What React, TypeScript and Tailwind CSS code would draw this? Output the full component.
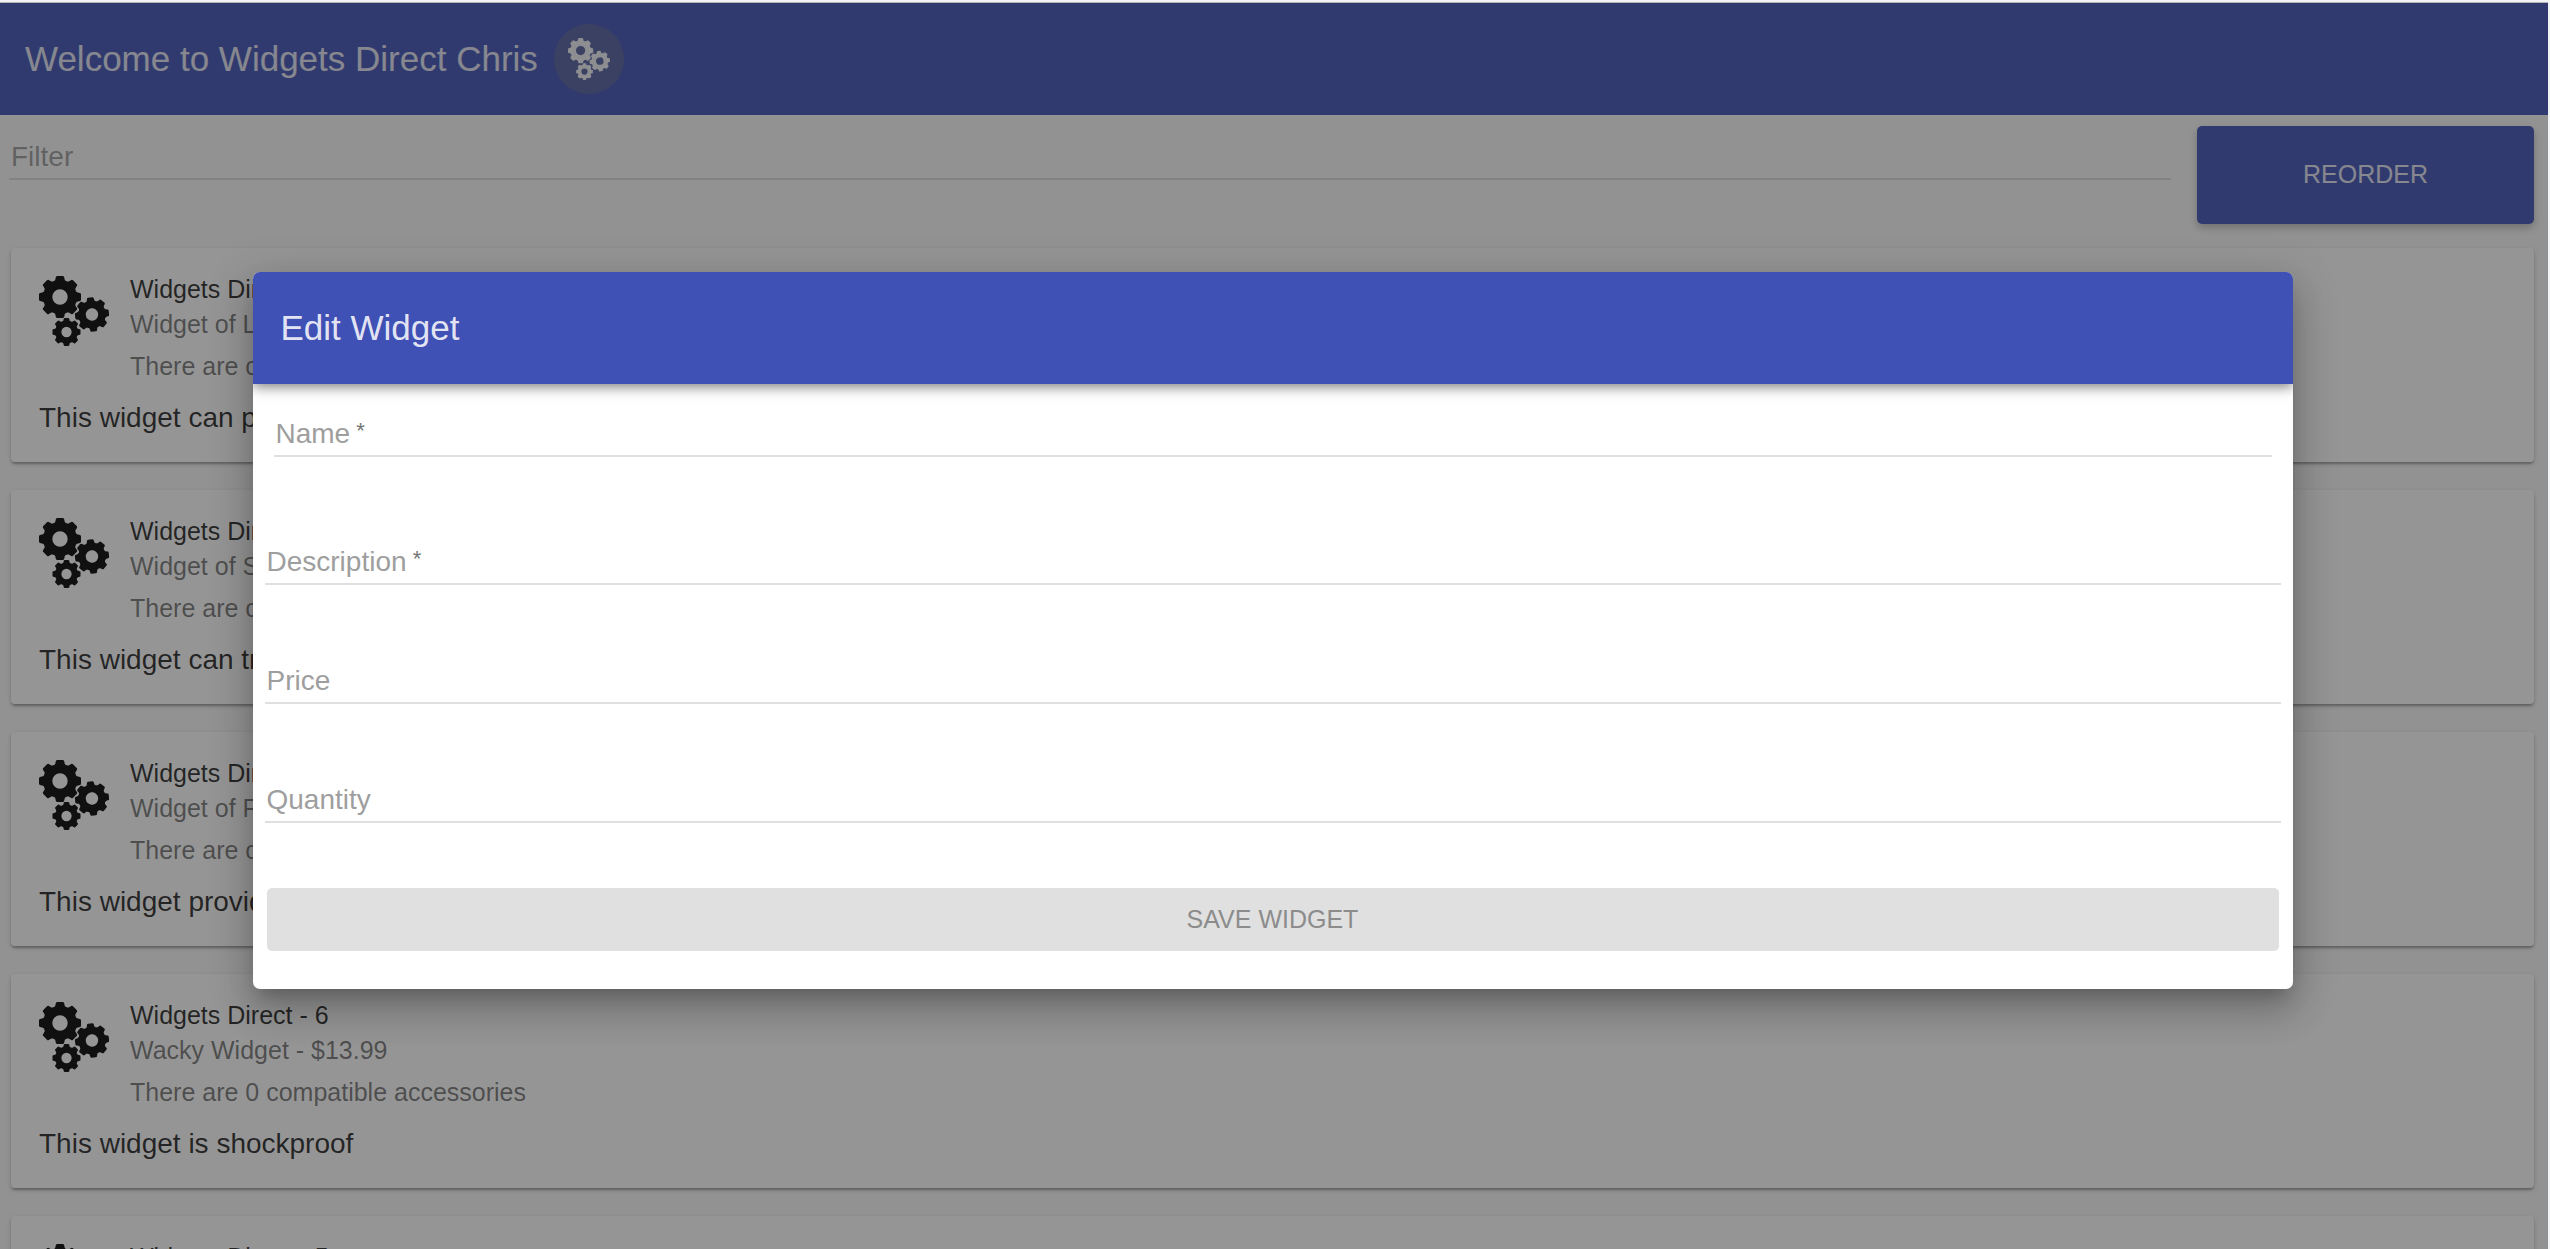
import React, { useState } from "react";

type Widget = {
  id: number;
  title: string;
  detail: string;
  accessories: string;
  description: string;
};

const widgets: Widget[] = [
  { id: 1, title: "Widgets Direct - 1", detail: "Widget of Love - $9.99", accessories: "There are compatible accessories", description: "This widget can play music" },
  { id: 2, title: "Widgets Direct - 2", detail: "Widget of Steel - $19.99", accessories: "There are compatible accessories", description: "This widget can travel" },
  { id: 3, title: "Widgets Direct - 3", detail: "Widget of Power - $29.99", accessories: "There are compatible accessories", description: "This widget provides power" },
  { id: 6, title: "Widgets Direct - 6", detail: "Wacky Widget - $13.99", accessories: "There are 0 compatible accessories", description: "This widget is shockproof" },
  { id: 5, title: "Widgets Direct - 5", detail: "Wise Widget - $15.99", accessories: "There are 0 compatible accessories", description: "This widget is waterproof" },
];

const teeth = [0, 45, 90, 135, 180, 225, 270, 315];

// one gear, drawn at radius 21 around the origin
const Gear: React.FC<{ x: number; y: number; size: number; turn: number }> = ({ x, y, size, turn }) => (
  <g transform={`translate(${x} ${y}) rotate(${turn}) scale(${size / 21})`}>
    <circle r="12.3" fill="none" stroke="currentColor" strokeWidth="9.2" />
    {teeth.map((angle) => (
      <path
        key={angle}
        d="M-6.6 -15 L-4.8 -17 L-4.1 -20 Q-3.8 -21 -2.6 -21 L2.6 -21 Q3.8 -21 4.1 -20 L4.8 -17 L6.6 -15 Z"
        transform={`rotate(${angle})`}
        fill="currentColor"
      />
    ))}
  </g>
);

const Gears: React.FC<{ className: string }> = ({ className }) => (
  <svg viewBox="0 0 70 70" className={className} aria-hidden="true">
    <Gear x={21} y={21} size={21} turn={0} />
    <Gear x={53} y={38.5} size={17} turn={-6} />
    <Gear x={27.5} y={56} size={14} turn={0} />
  </svg>
);

const WidgetCard: React.FC<{ widget: Widget }> = ({ widget }) => (
  <li className="rounded-[4px] bg-white px-7 pt-6 pb-[25px] shadow-[0_2px_5px_rgba(0,0,0,0.2),0_2px_2px_rgba(0,0,0,0.14),0_4px_2px_-2px_rgba(0,0,0,0.12)]">
    <div className="flex gap-[21px]">
      <Gears className="mt-1 size-[70px] shrink-0" />
      <div className="text-[25px] leading-[35px] text-black/55">
        <h2 className="text-black/85">{widget.title}</h2>
        <p>{widget.detail}</p>
        <p className="mt-[7px]">{widget.accessories}</p>
      </div>
    </div>
    <p className="mt-[15px] text-[28px] leading-[38px] text-black/85">{widget.description}</p>
  </li>
);

type FieldProps = {
  id: string;
  label: string;
  required?: boolean;
  value: string;
  onChange: (value: string) => void;
};

const Field: React.FC<FieldProps> = ({ id, label, required, value, onChange }) => (
  <div className="grid border-b-2 border-[#e0e0e0] pt-1">
    <label htmlFor={id} className="col-start-1 row-start-1 px-[2px] text-[28px] leading-[42px] text-[#9e9e9e]">
      {value === "" && label}
      {value === "" && required && <span className="align-top text-[22px] leading-9 text-[#757575]"> *</span>}
    </label>
    <input
      id={id}
      required={required}
      value={value}
      onChange={(e) => onChange(e.target.value)}
      className="col-start-1 row-start-1 w-full bg-transparent px-[2px] text-[28px] outline-none"
    />
  </div>
);

const App: React.FC = () => {
  const [filter, setFilter] = useState("");
  const [name, setName] = useState("");
  const [description, setDescription] = useState("");
  const [price, setPrice] = useState("");
  const [quantity, setQuantity] = useState("");

  return (
    <div className="h-screen overflow-hidden border-t-2 border-r-2 border-[#f1f3f4] font-['Liberation_Sans',Arial,sans-serif]">
      <div className="relative h-full overflow-hidden border-t border-[#b6b4b6] bg-[#fafafa]">
        <header className="flex h-28 items-center gap-4 bg-[#3f51b5] px-[25px] text-white/85">
          <h1 className="text-[35px]">Welcome to Widgets Direct Chris</h1>
          <div className="flex size-[70px] items-center justify-center rounded-full bg-[#535f9d] text-white/90">
            <Gears className="size-[42px]" />
          </div>
        </header>

        <div className="flex items-start justify-between pt-[11px] pr-[14px] pl-[9px]">
          <div className="mr-[26px] grid flex-1 border-b-2 border-black/12 pt-[10px]">
            <label htmlFor="filter" className="col-start-1 row-start-1 px-[2px] text-[28px] leading-[42px] text-black/40">
              {filter === "" && "Filter"}
            </label>
            <input
              id="filter"
              value={filter}
              onChange={(e) => setFilter(e.target.value)}
              className="col-start-1 row-start-1 w-full bg-transparent px-[2px] text-[28px] outline-none"
            />
          </div>
          <button
            type="button"
            className="h-[98px] w-[337px] rounded-[5px] bg-[#3f51b5] text-[25px] text-white/85 uppercase shadow-[0_4px_9px_rgba(0,0,0,0.26)]"
          >
            Reorder
          </button>
        </div>

        <ul className="mt-6 flex flex-col gap-7 pr-[14px] pl-[11px]">
          {widgets.map((widget) => (
            <WidgetCard key={widget.id} widget={widget} />
          ))}
        </ul>

        <div className="absolute inset-0 flex items-center justify-center bg-[rgba(33,33,33,0.48)] pt-[9px] pr-[3px]">
          <div
            role="dialog"
            aria-labelledby="dialog-title"
            className="w-[80vw] overflow-hidden rounded-[7px] bg-white shadow-[0_12px_16px_-7px_rgba(0,0,0,0.2),0_23px_35px_3px_rgba(0,0,0,0.14),0_9px_44px_8px_rgba(0,0,0,0.12)]"
          >
            <div className="flex h-28 items-center bg-[#3f51b5] px-7 text-white/87 shadow-[0_3px_12px_rgba(0,0,0,0.5)]">
              <h2 id="dialog-title" className="text-[35px]">Edit Widget</h2>
            </div>
            <form className="px-3 pt-[25px] pb-[38px]" onSubmit={(e) => e.preventDefault()}>
              <div className="px-[9px]">
                <Field id="name" label="Name" required value={name} onChange={setName} />
              </div>
              <div className="mt-20 flex flex-col gap-[71px]">
                <Field id="description" label="Description" required value={description} onChange={setDescription} />
                <Field id="price" label="Price" value={price} onChange={setPrice} />
                <Field id="quantity" label="Quantity" value={quantity} onChange={setQuantity} />
              </div>
              <div className="mt-[65px] px-[2px]">
                <button
                  type="submit"
                  disabled={name === "" || description === ""}
                  className="h-[63px] w-full rounded-[5px] bg-[#3f51b5] text-[25px] text-white uppercase disabled:bg-[#e0e0e0] disabled:text-[#8c8c8c]"
                >
                  Save Widget
                </button>
              </div>
            </form>
          </div>
        </div>
      </div>
    </div>
  );
};

export default App;
